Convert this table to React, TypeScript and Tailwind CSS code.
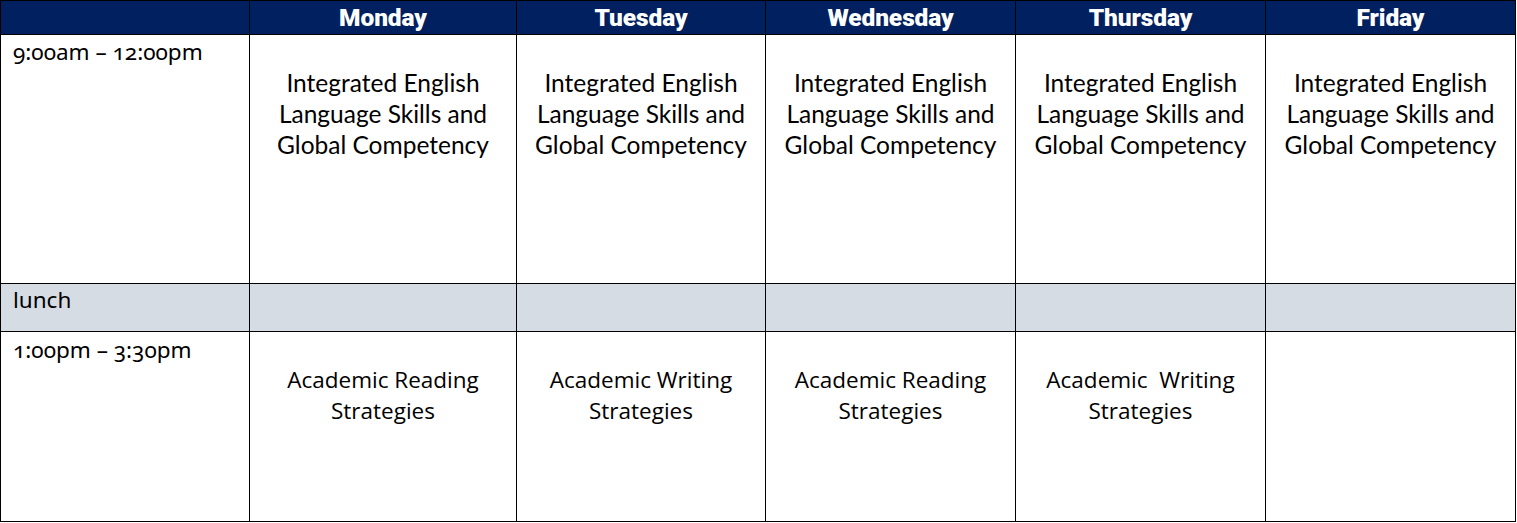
import React from 'react';

const days = ['Monday', 'Tuesday', 'Wednesday', 'Thursday', 'Friday'];

const morning = days.map(() => ['Integrated English', 'Language Skills and', 'Global Competency']);

const afternoon: string[][] = [
  ['Academic Reading', 'Strategies'],
  ['Academic Writing', 'Strategies'],
  ['Academic Reading', 'Strategies'],
  ['Academic\u00a0\u00a0Writing', 'Strategies'],
  [],
];

export default function App() {
  return (
    <div className="bg-white w-[1517px] h-[523px]">
      <div className="grid grid-cols-[248px_266px_248px_249px_249px_249px] grid-rows-[33px_248px_47px_189px] gap-px bg-black p-px w-[1516px]">
        {/* Header */}
        <div className="bg-[#002060]" />
        {days.map((day) => (
          <div
            key={day}
            className="bg-[#002060] flex items-center justify-center text-white font-['Roboto',sans-serif] font-black text-[24.5px] leading-none tracking-[-0.1px] pt-[1px]"
          >
            {day}
          </div>
        ))}

        {/* Morning */}
        <div className="bg-white pl-3 pt-[2px] font-['Noto_Sans',sans-serif] oldstyle-nums text-[22.5px] leading-[30px] text-black">
          9:00am – 12:00pm
        </div>
        {morning.map((lines, i) => (
          <div key={i} className="bg-white pt-[32px] text-center font-['Lato',sans-serif] text-[24.5px] leading-[31px] text-black">
            {lines.map((l) => (
              <div key={l}>{l}</div>
            ))}
          </div>
        ))}

        {/* Lunch */}
        <div className="bg-[#d6dce4] pl-3 pt-[1px] font-['Noto_Sans',sans-serif] text-[22.5px] leading-[30px] text-black">
          lunch
        </div>
        {days.map((d) => (
          <div key={d} className="bg-[#d6dce4]" />
        ))}

        {/* Afternoon */}
        <div className="bg-white pl-3 pt-[3px] font-['Noto_Sans',sans-serif] oldstyle-nums text-[22.5px] leading-[30px] text-black">
          1:00pm – 3:30pm
        </div>
        {afternoon.map((lines, i) => (
          <div key={i} className="bg-white pt-[32px] text-center font-['Open_Sans',sans-serif] text-[22.5px] leading-[31px] text-black">
            {lines.map((l) => (
              <div key={l}>{l}</div>
            ))}
          </div>
        ))}
      </div>
    </div>
  );
}
